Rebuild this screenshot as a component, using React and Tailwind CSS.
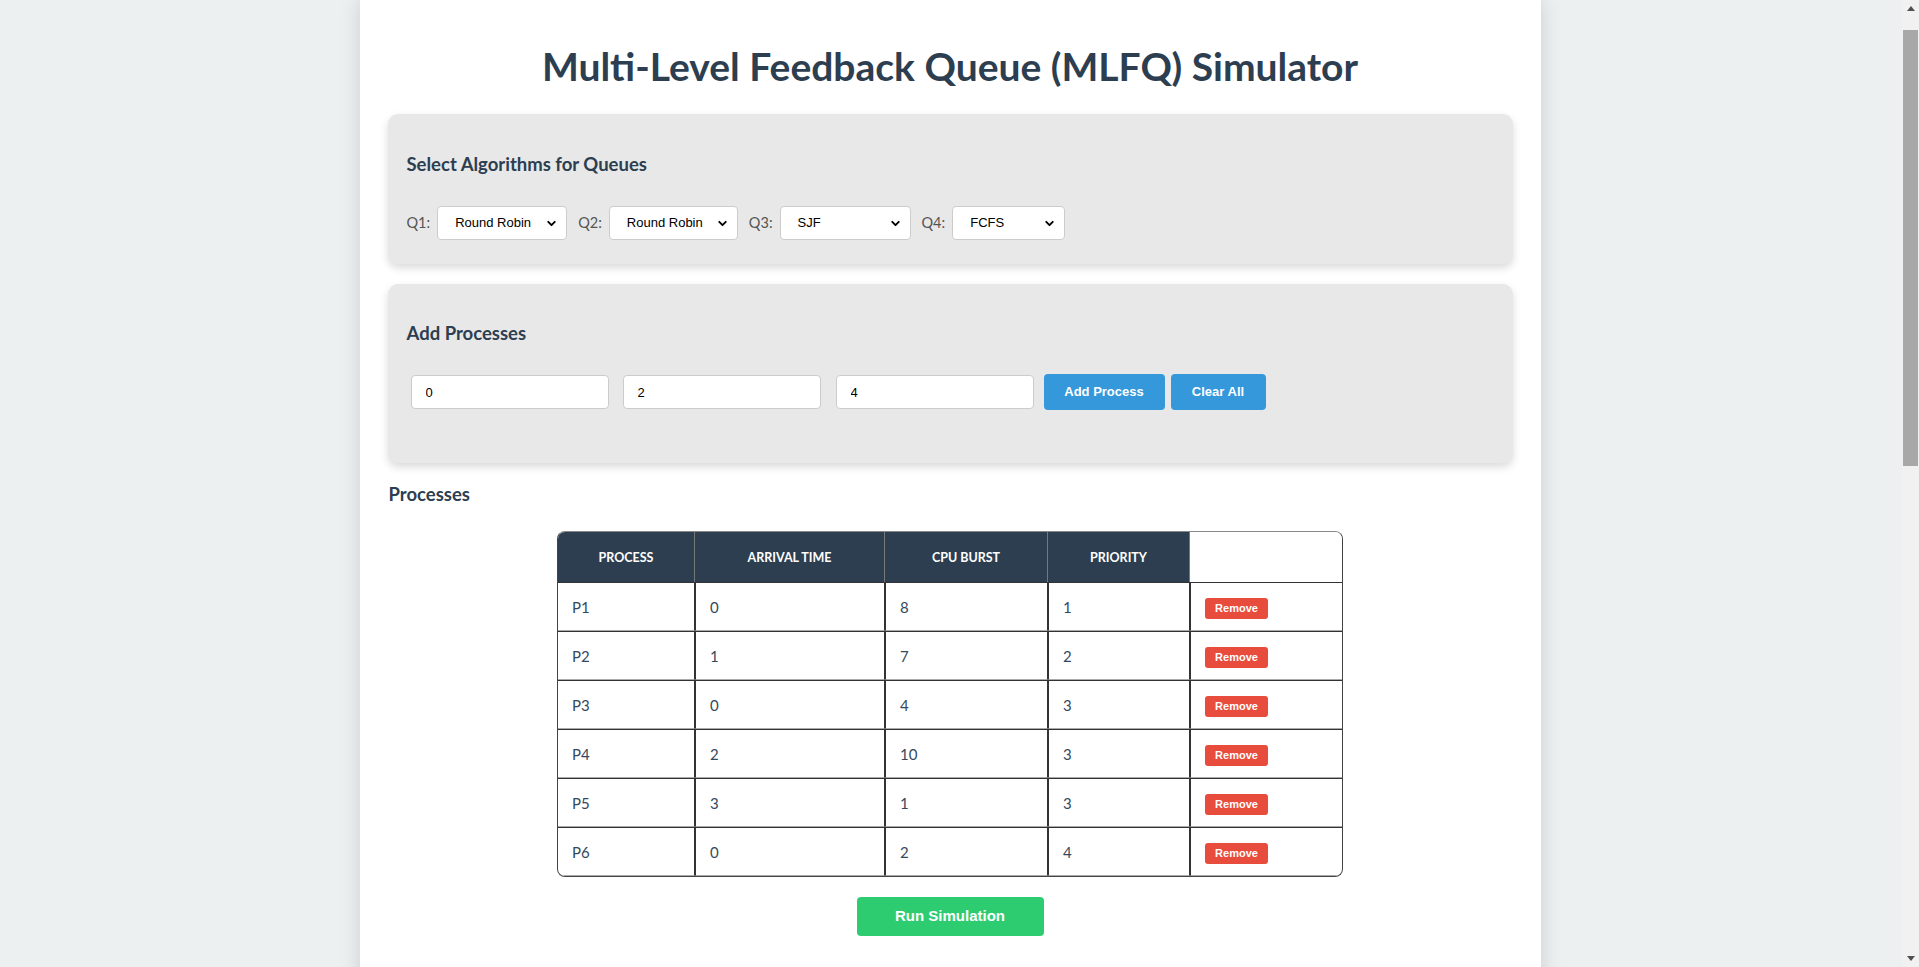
import React, { useState } from "react";
import { ChevronDown } from "lucide-react";

const ALGORITHMS = ["Round Robin", "SJF", "FCFS", "Priority"];

const START_PROCESSES = [
  { id: "P1", arrival: 0, burst: 8, priority: 1 },
  { id: "P2", arrival: 1, burst: 7, priority: 2 },
  { id: "P3", arrival: 0, burst: 4, priority: 3 },
  { id: "P4", arrival: 2, burst: 10, priority: 3 },
  { id: "P5", arrival: 3, burst: 1, priority: 3 },
  { id: "P6", arrival: 0, burst: 2, priority: 4 },
];

/* ================= QUEUE SELECT ================= */
function QueueSelect({ label, value, onChange, width }) {
  return (
    <div className="flex items-center">
      <span className="mr-[7px] text-[14.5px] text-[#555]">{label}:</span>
      <div className={`relative mr-[11px] ${width}`}>
        <select
          value={value}
          onChange={(e) => onChange(e.target.value)}
          className="h-[34px] w-full appearance-none rounded-[4px] border border-[#ccc] bg-white pl-[17px] font-['Liberation_Sans',Arial,sans-serif] text-[13px] text-black outline-none"
        >
          {ALGORITHMS.map((a) => (
            <option key={a}>{a}</option>
          ))}
        </select>
        <ChevronDown
          size={13}
          strokeWidth={3.5}
          className="pointer-events-none absolute right-[9px] top-[11px] text-black"
        />
      </div>
    </div>
  );
}

/* ================= SCROLLBAR STRIP ================= */
function ScrollStrip() {
  return (
    <div className="flex w-[17px] shrink-0 flex-col bg-[#f1f1f1]">
      <div className="flex h-[17px] items-center justify-center">
        <svg width="8" height="5" viewBox="0 0 8 5">
          <path d="M0 5 L4 0 L8 5 Z" fill="#505050" />
        </svg>
      </div>
      <div className="mx-auto mt-[13px] h-[436px] w-[15px] bg-[#a8a8a8]" />
      <div className="flex-1" />
      <div className="flex h-[17px] items-center justify-center">
        <svg width="8" height="5" viewBox="0 0 8 5">
          <path d="M0 0 L8 0 L4 5 Z" fill="#505050" />
        </svg>
      </div>
    </div>
  );
}

/* ================= MAIN ================= */
export default function App() {
  const [queues, setQueues] = useState(["Round Robin", "Round Robin", "SJF", "FCFS"]);
  const [processes, setProcesses] = useState(START_PROCESSES);
  const [arrival, setArrival] = useState("0");
  const [burst, setBurst] = useState("2");
  const [priority, setPriority] = useState("4");

  const setQueue = (i, v) => setQueues((q) => q.map((x, j) => (j === i ? v : x)));

  const addProcess = () => {
    const id = `P${processes.length + 1}`;
    setProcesses([...processes, { id, arrival: Number(arrival), burst: Number(burst), priority: Number(priority) }]);
  };

  const widths = ["w-[130px]", "w-[129px]", "w-[131px]", "w-[113px]"];

  const inputCls =
    "h-[34px] w-[198px] rounded-[4px] border border-[#ccc] bg-white pl-[14px] font-['Liberation_Sans',Arial,sans-serif] text-[13px] text-black outline-none";

  const thCls = "border-r border-[#777] bg-[#2c3e50] pb-[15px] pt-[17px] text-[12.5px] font-bold uppercase leading-[18px] text-white";
  const tdCls = "border-t border-b border-[#333] border-b-[#aaa] px-[14px] pb-[13px] pt-[15px]";

  return (
    <div className="flex h-screen font-['Lato',sans-serif] text-[#2c3e50]">
      <div className="flex-1 overflow-y-auto bg-[#ecf0f1] [scrollbar-width:none]">
        <div className="mx-auto min-h-[2068px] w-[1181px] -translate-x-px bg-white px-[28px] pt-[44px] shadow-[0_0_20px_rgba(0,0,0,0.14)]">
          <h1 className="text-center text-[39px] font-bold leading-[44px] text-[#2c3e50]">
            Multi-Level Feedback Queue (MLFQ) Simulator
          </h1>

          {/* Queue algorithms */}
          <div className="mt-[26px] rounded-[10px] bg-[#e8e8e8] px-[19px] pb-[24px] pt-[20px] shadow-[0_4px_8px_rgba(0,0,0,0.15)]">
            <h3 className="mt-[18px] text-[18.5px] font-bold leading-[24px]">Select Algorithms for Queues</h3>
            <div className="mt-[30px] flex items-center">
              {queues.map((q, i) => (
                <QueueSelect key={i} label={`Q${i + 1}`} value={q} width={widths[i]} onChange={(v) => setQueue(i, v)} />
              ))}
            </div>
          </div>

          {/* Add processes */}
          <div className="mt-[20px] rounded-[10px] bg-[#e8e8e8] px-[19px] pb-[53px] pt-[20px] shadow-[0_4px_8px_rgba(0,0,0,0.15)]">
            <h3 className="mt-[17px] text-[18.5px] font-bold leading-[24px]">Add Processes</h3>
            <div className="mt-[29px] flex items-center">
              <input className={`ml-[4px] ${inputCls}`} value={arrival} onChange={(e) => setArrival(e.target.value)} />
              <input className={`ml-[14px] ${inputCls}`} value={burst} onChange={(e) => setBurst(e.target.value)} />
              <input className={`ml-[15px] ${inputCls}`} value={priority} onChange={(e) => setPriority(e.target.value)} />
              <button
                onClick={addProcess}
                className="ml-[10px] h-[36px] w-[121px] rounded-[4px] bg-[#3498db] font-['Liberation_Sans',Arial,sans-serif] text-[13px] font-bold text-white"
              >
                Add Process
              </button>
              <button
                onClick={() => setProcesses([])}
                className="ml-[6px] h-[36px] w-[95px] rounded-[4px] bg-[#3498db] font-['Liberation_Sans',Arial,sans-serif] text-[13px] font-bold text-white"
              >
                Clear All
              </button>
            </div>
          </div>

          {/* Process table */}
          <h3 className="mt-[19px] pl-px text-[18.5px] font-bold leading-[24px]">Processes</h3>

          <div className="mx-auto mt-[25px] w-[786px] overflow-hidden rounded-[8px] border border-[#444] border-t-[#888]">
            <table className="w-full table-fixed border-separate border-spacing-0">
              <thead>
                <tr>
                  <th className={`w-[137px] ${thCls}`}>Process</th>
                  <th className={`w-[190px] ${thCls}`}>Arrival Time</th>
                  <th className={`w-[163px] ${thCls}`}>CPU Burst</th>
                  <th className={`w-[142px] ${thCls}`}>Priority</th>
                  <th className="bg-white"></th>
                </tr>
              </thead>
              <tbody>
                {processes.map((p) => (
                  <tr key={p.id} className="text-[15px] leading-[19px] text-[#34495e]">
                    <td className={`border-r ${tdCls}`}>{p.id}</td>
                    <td className={`border-x ${tdCls}`}>{p.arrival}</td>
                    <td className={`border-x ${tdCls}`}>{p.burst}</td>
                    <td className={`border-x ${tdCls}`}>{p.priority}</td>
                    <td className="border-b border-l border-t border-[#333] border-b-[#aaa] px-[14px] pb-[11px] pt-[15px]">
                      <button
                        onClick={() => setProcesses(processes.filter((x) => x.id !== p.id))}
                        className="block h-[21px] w-[63px] rounded-[3px] bg-[#e74c3c] font-['Liberation_Sans',Arial,sans-serif] text-[11px] font-bold leading-[21px] text-white"
                      >
                        Remove
                      </button>
                    </td>
                  </tr>
                ))}
              </tbody>
            </table>
          </div>

          <div className="mt-[20px] flex justify-center">
            <button className="h-[39px] w-[187px] rounded-[4px] bg-[#2ecc71] font-['Liberation_Sans',Arial,sans-serif] text-[15px] font-bold text-white">
              Run Simulation
            </button>
          </div>
        </div>
      </div>
      <ScrollStrip />
    </div>
  );
}
